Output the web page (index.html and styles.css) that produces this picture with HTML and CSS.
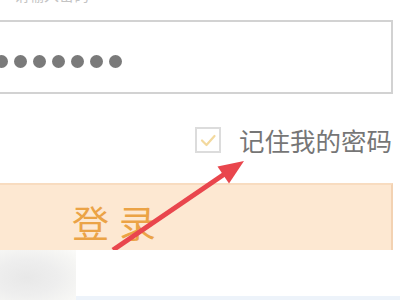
FILE: index.html
```html
<!DOCTYPE html>
<html lang="zh-CN">
<head>
<meta charset="utf-8">
<title>登录</title>
<link rel="stylesheet" href="styles.css">
</head>
<body>
<div class="page">
  <div class="hint"><span class="hint-text">请输入密码</span></div>
  <div class="pwd-box">
    <div class="dots">
      <span class="dot"></span><span class="dot"></span><span class="dot"></span><span class="dot"></span><span class="dot"></span><span class="dot"></span><span class="dot"></span>
    </div>
  </div>
  <div class="remember">
    <span class="check">
      <svg width="26" height="26" viewBox="0 0 26 26"><rect x="1" y="1" width="24" height="24" fill="#fff" stroke="#dcdcdc" stroke-width="2"/><path d="M7 13.5 L11.5 18 L19.5 9" fill="none" stroke="#f3d99e" stroke-width="2.2" stroke-linecap="round" stroke-linejoin="round"/></svg>
    </span>
    <span class="label">记住我的密码</span>
  </div>
  <div class="login-btn"><span class="btn-text">登录</span></div>
  <div class="footer"><div class="blur"></div><div class="strip"></div></div>
  <svg class="arrow" width="400" height="300" viewBox="0 0 400 300">
    <line x1="113" y1="250" x2="226" y2="173" stroke="#e9464d" stroke-width="5"/>
    <polygon points="244,161 217.5,166.5 229,183.5" fill="#e9464d"/>
  </svg>
</div>
</body>
</html>
```

FILE: styles.css
```css
html, body {
  margin: 0;
  padding: 0;
  background: #ffffff;
}
.page {
  position: relative;
  width: 400px;
  height: 300px;
  overflow: hidden;
  font-family: "Noto Sans CJK SC", "Noto Sans", sans-serif;
}
.hint {
  height: 20px;
  overflow: hidden;
  padding-left: 14px;
}
.hint-text {
  display: block;
  margin-top: -14px;
  font-size: 15px;
  line-height: 18px;
  color: #c4c4c4;
}
.pwd-box {
  box-sizing: border-box;
  height: 74px;
  width: 413px;
  margin-left: -20px;
  border: 2px solid #d2d2d2;
  display: flex;
  align-items: center;
  padding-top: 8px;
  padding-left: 13px;
}
.dots {
  display: flex;
  gap: 6px;
}
.dot {
  width: 13px;
  height: 13px;
  border-radius: 50%;
  background: #7a7a7a;
}
.remember {
  margin-top: 33px;
  height: 26px;
  display: flex;
  align-items: center;
  justify-content: flex-end;
  padding-right: 8px;
  gap: 18px;
}
.check {
  display: block;
  width: 26px;
  height: 26px;
}
.check svg {
  display: block;
}
.label {
  font-size: 25.5px;
  line-height: 26px;
  color: #767676;
}
.login-btn {
  box-sizing: border-box;
  margin-top: 30px;
  margin-left: -20px;
  width: 413px;
  height: 67px;
  background: #fde8d2;
  border-top: 2px solid #f8dcc0;
  border-right: 2px solid #f3d2b2;
  display: flex;
  align-items: center;
  padding-top: 8px;
  padding-left: 92px;
}
.btn-text {
  font-size: 37px;
  line-height: 40px;
  letter-spacing: 10px;
  color: #eba346;
}
.footer {
  position: relative;
  z-index: 2;
  height: 50px;
  background: #ffffff;
}
.blur {
  position: absolute;
  left: 0;
  top: 0;
  width: 76px;
  height: 50px;
  background: radial-gradient(ellipse at 35% 55%, #e8e8e8 0%, #eeeeee 45%, #f6f6f4 80%, #fbfbf9 100%);
}
.strip {
  position: absolute;
  left: 76px;
  right: 0;
  bottom: 0;
  height: 4px;
  background: #edf3fa;
}
.arrow {
  position: absolute;
  left: 0;
  top: 0;
  z-index: 1;
}
```
